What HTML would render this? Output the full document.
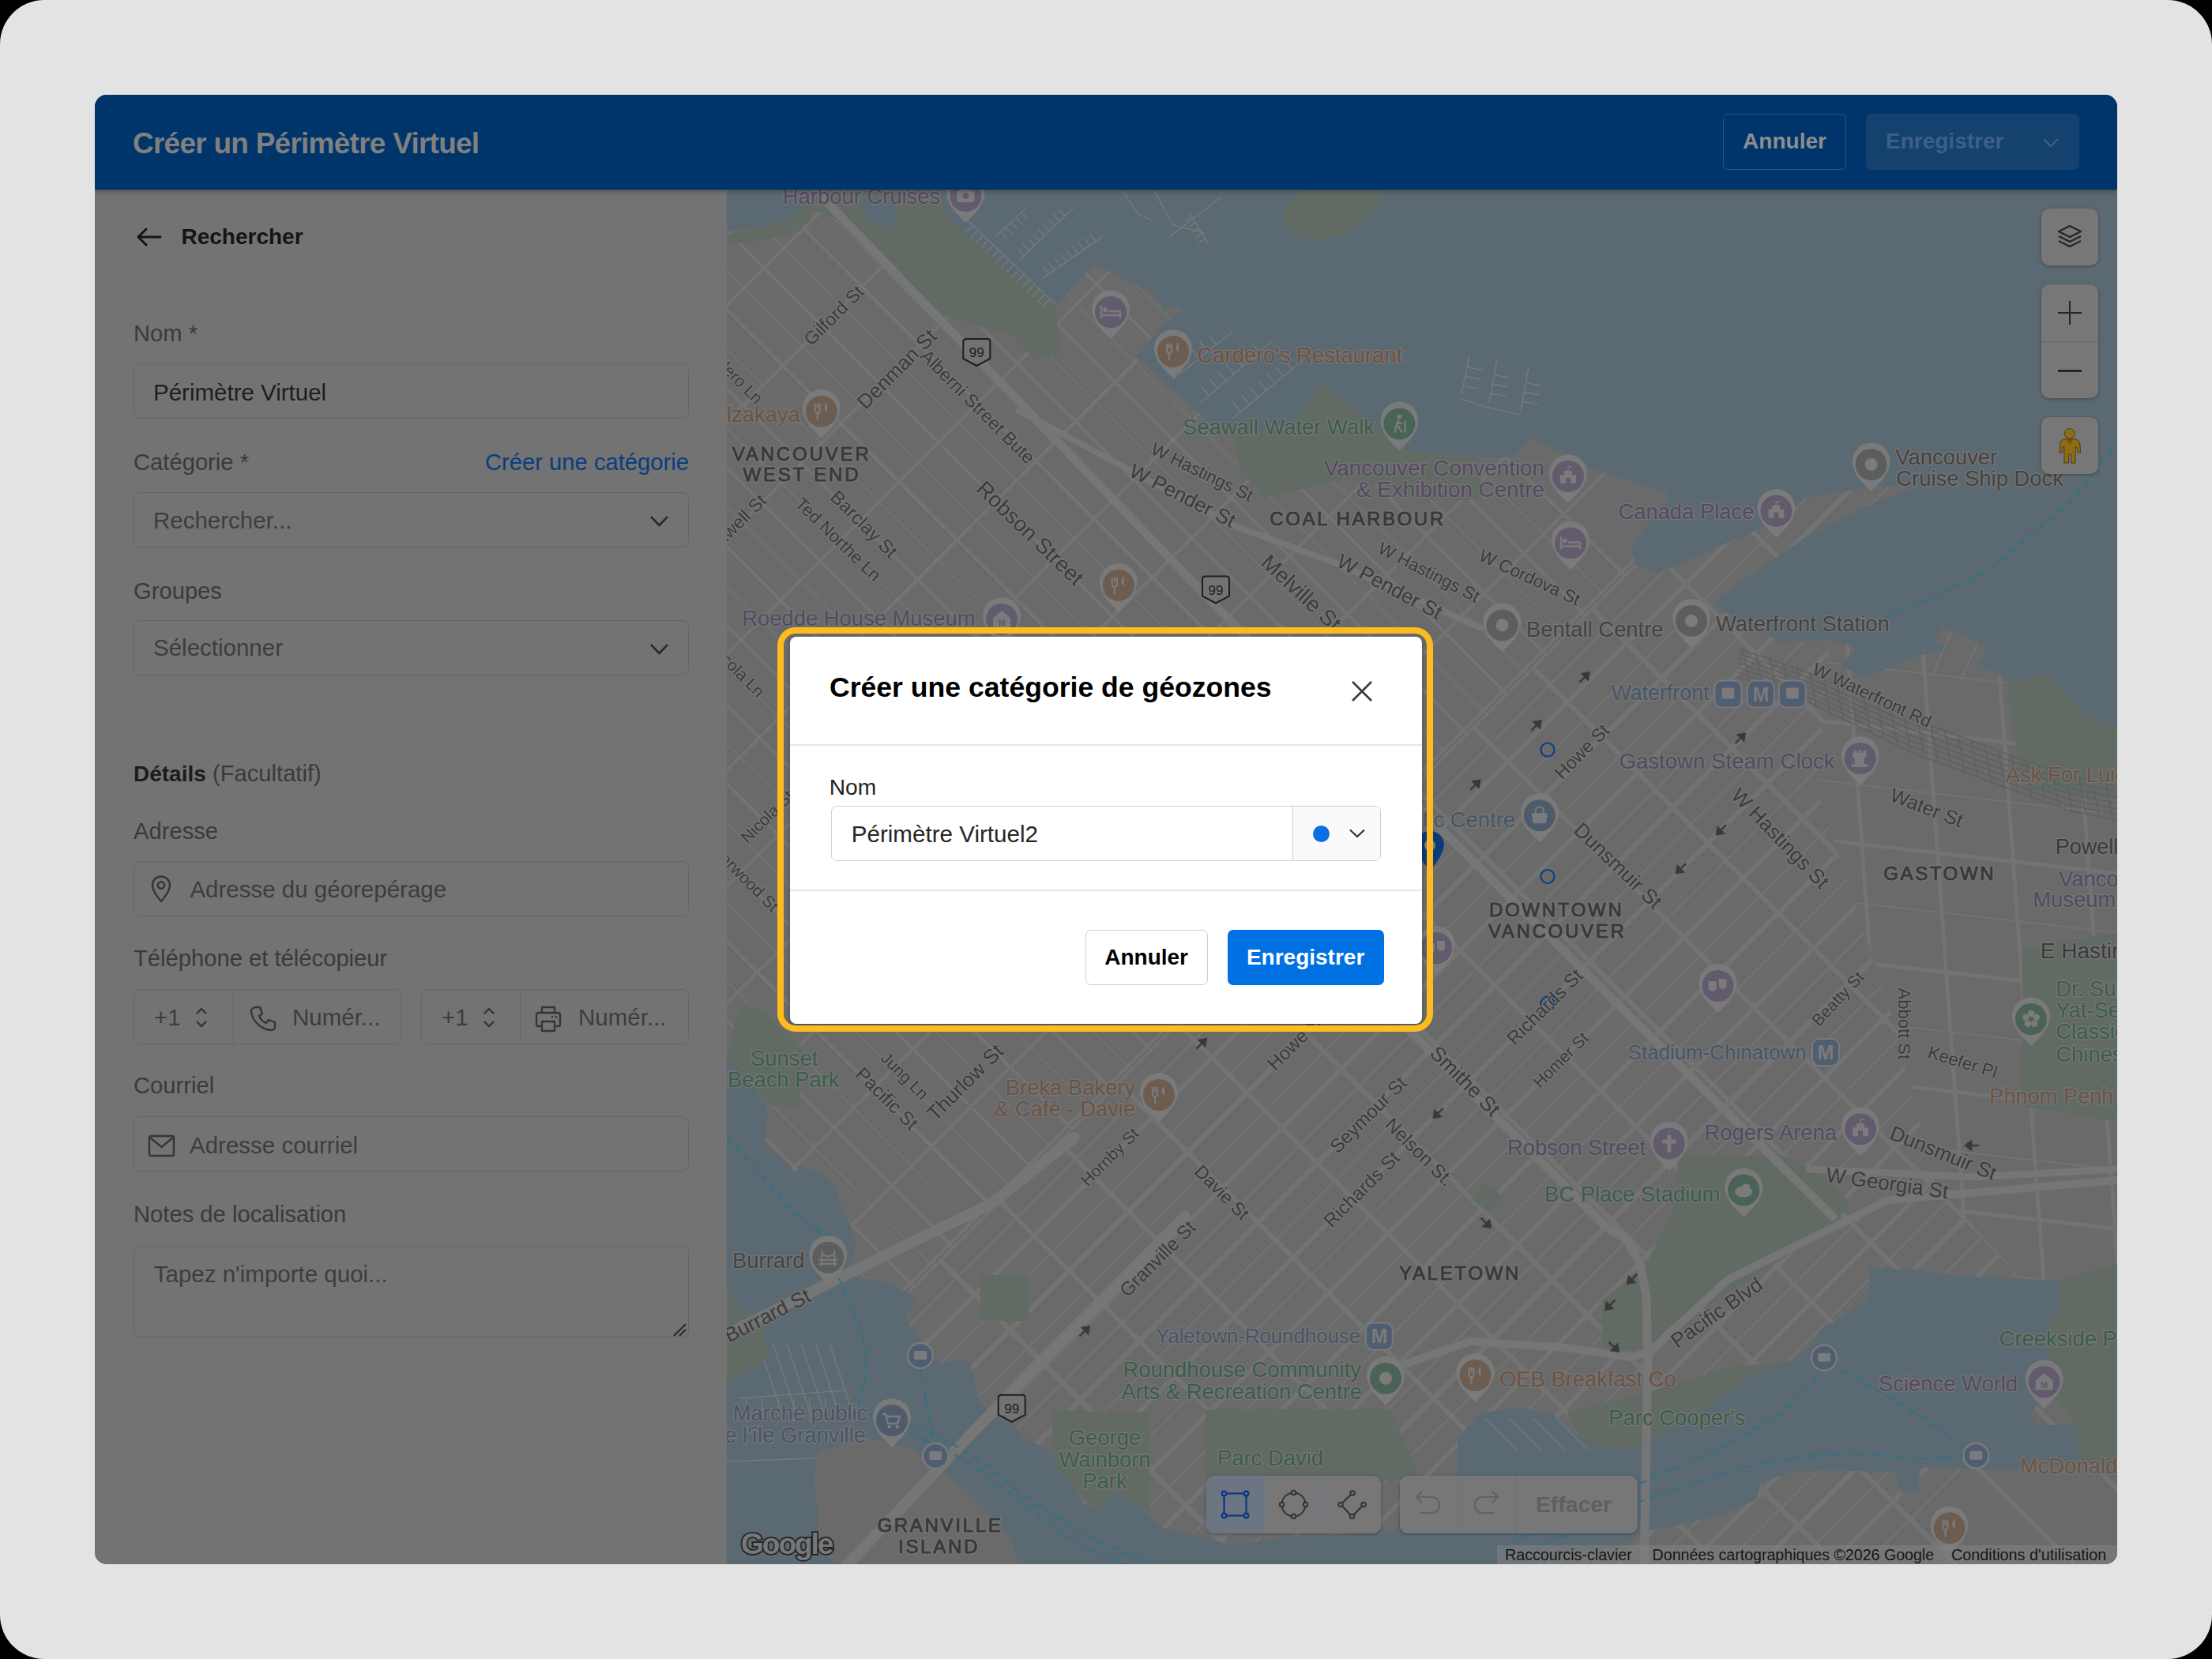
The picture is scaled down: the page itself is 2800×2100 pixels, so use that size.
<!DOCTYPE html>
<html><head><meta charset="utf-8">
<style>
*{box-sizing:border-box;margin:0;padding:0}
html,body{width:2800px;height:2100px;overflow:hidden;background:#000;font-family:"Liberation Sans",sans-serif}
#frame{position:absolute;left:0;top:0;width:2800px;height:2100px;background:#e3e3e3;border-radius:56px}
#win{position:absolute;left:120px;top:120px;width:2560px;height:1860px;border-radius:15px;overflow:hidden;background:#737373}
.abs{position:absolute}
#hdr{position:absolute;left:0;top:0;width:2560px;height:120px;background:#00356b;z-index:5;box-shadow:0 2px 6px rgba(0,0,0,.35)}
#hdr .title{position:absolute;left:48px;top:40px;font-size:37px;font-weight:700;color:#808080;letter-spacing:-0.75px;line-height:44px;white-space:nowrap}
#hbtn1{position:absolute;left:2061px;top:24px;width:156px;height:71px;border:1.5px solid #2a5380;border-radius:6px;color:#8e8e8e;font-weight:700;font-size:28px;line-height:67px;text-align:center}
#hbtn2{position:absolute;left:2242px;top:24px;width:270px;height:71px;background:#15416f;border-radius:7px;color:#3b5f8a;font-weight:700;font-size:28px;line-height:70px;padding-left:25px}
#panel{position:absolute;left:0;top:120px;width:800px;height:1740px;background:#737373}
.lbl{position:absolute;left:49px;font-size:29.2px;color:#3a3a3a;white-space:nowrap;line-height:29.2px}
.inp{position:absolute;left:49px;width:703px;height:70px;border:1.5px solid #666;border-radius:8px}
.itx{position:absolute;font-size:29.5px;color:#1e1e1e;white-space:nowrap;line-height:29.5px}
.ph{color:#3d3d3d}
#map{position:absolute;left:800px;top:120px;width:1760px;height:1740px;background:#707070;overflow:hidden}
.mbtn{position:absolute;background:#777;border-radius:10px;box-shadow:0 1px 4px rgba(0,0,0,.3)}
#modal{position:absolute;left:1000px;top:806px;width:800px;height:490px;background:#fff;border-radius:8px;z-index:20;box-shadow:0 2px 4px rgba(0,0,0,.3)}
#ring{position:absolute;left:984px;top:794px;width:830px;height:512px;border:8px solid #fdbb1f;border-radius:23px;z-index:21}
</style></head>
<body>
<div id="frame"></div>
<div id="win">
  <div id="hdr">
    <div class="title">Créer un Périmètre Virtuel</div>
    <div id="hbtn1">Annuler</div>
    <div id="hbtn2">Enregistrer<svg class="abs" style="left:223px;top:30px" width="22" height="14" viewBox="0 0 22 14"><path d="M2 2 L11 11 L20 2" fill="none" stroke="#3b5f8a" stroke-width="2.2"/></svg></div>
  </div>
  <div id="panel">
    <svg class="abs" style="left:52px;top:47px" width="34" height="26" viewBox="0 0 34 26"><path d="M31 13 H4 M13 3 L3 13 L13 23" fill="none" stroke="#161616" stroke-width="3" stroke-linecap="round" stroke-linejoin="round"/></svg>
    <div class="abs" style="left:109.5px;top:46.3px;font-size:28px;line-height:28px;font-weight:700;color:#141414;white-space:nowrap">Rechercher</div>
    <div class="abs" style="left:0;top:120px;width:800px;height:1px;background:#6b6b6b"></div>
    <div class="lbl" style="top:167.5px">Nom *</div>
    <div class="inp" style="top:220px"></div>
    <div class="itx" style="left:74px;top:241.6px">Périmètre Virtuel</div>
    <div class="lbl" style="top:330.5px">Catégorie *</div>
    <div class="lbl" style="left:auto;right:48px;top:330.5px;color:#083d7f">Créer une catégorie</div>
    <div class="inp" style="top:383px"></div>
    <div class="itx ph" style="left:74px;top:404px">Rechercher...</div>
    <svg class="abs" style="left:702px;top:411px" width="25" height="17" viewBox="0 0 25 17"><path d="M2 3 L12.5 14 L23 3" fill="none" stroke="#2a2a2a" stroke-width="2.6"/></svg>
    <div class="lbl" style="top:493.5px">Groupes</div>
    <div class="inp" style="top:545px"></div>
    <div class="itx ph" style="left:74px;top:565.3px">Sélectionner</div>
    <svg class="abs" style="left:702px;top:573px" width="25" height="17" viewBox="0 0 25 17"><path d="M2 3 L12.5 14 L23 3" fill="none" stroke="#2a2a2a" stroke-width="2.6"/></svg>
    <div class="abs" style="left:49px;top:686.5px;width:703px;height:1px;background:#6c6c6c"></div>
    <div class="lbl" style="top:725.4px"><b style="color:#1c1c1c;font-size:28px">Détails</b> (Facultatif)</div>
    <div class="lbl" style="top:797.5px">Adresse</div>
    <div class="inp" style="top:850px"></div>
    <svg class="abs" style="left:69px;top:867px" width="30" height="36" viewBox="0 0 30 36"><path d="M15 34 C15 34 4 22 4 13.5 A11 11 0 0 1 26 13.5 C26 22 15 34 15 34 Z" fill="none" stroke="#353535" stroke-width="2.4" stroke-linejoin="round"/><circle cx="15" cy="13.5" r="4.2" fill="none" stroke="#353535" stroke-width="2.4"/></svg>
    <div class="itx ph" style="left:120.4px;top:871px">Adresse du géorepérage</div>
    <div class="lbl" style="top:959.4px">Téléphone et télécopieur</div>
    <div class="inp" style="top:1012px;width:339px"></div>
    <div class="abs" style="left:174.5px;top:1012px;width:1.5px;height:70px;background:#666"></div>
    <div class="itx ph" style="left:75px;top:1032.7px">+1</div>
    <svg class="abs" style="left:125px;top:1034px" width="20" height="28" viewBox="0 0 20 28"><path d="M4 9 L10 3 L16 9 M4 19 L10 25 L16 19" fill="none" stroke="#353535" stroke-width="2.4"/></svg>
    <svg class="abs" style="left:196px;top:1032px" width="34" height="34" viewBox="0 0 34 34"><path d="M8 3 L13 3 L16 11 L12 14 C14 19 16 21 21 23 L24 19 L32 22 L32 27 C32 30 30 32 27 32 C14 31 3 20 2 8 C2 5 5 3 8 3 Z" fill="none" stroke="#353535" stroke-width="2.3" stroke-linejoin="round"/></svg>
    <div class="itx ph" style="left:250px;top:1032.7px">Numér...</div>
    <div class="inp" style="left:413.4px;top:1012px;width:338.6px"></div>
    <div class="abs" style="left:537.5px;top:1012px;width:1.5px;height:70px;background:#666"></div>
    <div class="itx ph" style="left:439px;top:1032.7px">+1</div>
    <svg class="abs" style="left:489px;top:1034px" width="20" height="28" viewBox="0 0 20 28"><path d="M4 9 L10 3 L16 9 M4 19 L10 25 L16 19" fill="none" stroke="#353535" stroke-width="2.4"/></svg>
    <svg class="abs" style="left:557px;top:1032px" width="34" height="36" viewBox="0 0 34 36"><path d="M9 10 V3 H25 V10 M9 27 H4 C3 27 2 26 2 25 V13 C2 11 3 10 5 10 H29 C31 10 32 11 32 13 V25 C32 26 31 27 30 27 H25 M9 21 H25 V33 H9 Z" fill="none" stroke="#353535" stroke-width="2.3" stroke-linejoin="round"/><circle cx="22" cy="15" r="1.3" fill="#353535"/><circle cx="27" cy="15" r="1.3" fill="#353535"/></svg>
    <div class="itx ph" style="left:612px;top:1032.7px">Numér...</div>
    <div class="lbl" style="top:1120.3px">Courriel</div>
    <div class="inp" style="top:1173px"></div>
    <svg class="abs" style="left:67px;top:1196px" width="35" height="29" viewBox="0 0 35 29"><rect x="2" y="2" width="31" height="25" rx="2" fill="none" stroke="#353535" stroke-width="2.4"/><path d="M3 4 L17.5 16 L32 4" fill="none" stroke="#353535" stroke-width="2.4"/></svg>
    <div class="itx ph" style="left:120px;top:1194.5px">Adresse courriel</div>
    <div class="lbl" style="top:1282.6px">Notes de localisation</div>
    <div class="inp" style="top:1337px;height:116px"></div>
    <div class="itx ph" style="left:74.8px;top:1358px">Tapez n'importe quoi...</div>
    <svg class="abs" style="left:731px;top:1434px" width="19" height="19" viewBox="0 0 19 19"><path d="M2 17 L17 2 M9 17 L17 9" fill="none" stroke="#2a2a2a" stroke-width="2.2"/></svg>
  </div>
  <div id="map"><svg class="abs" style="left:0;top:0" width="1760" height="1740" viewBox="920 240 1760 1740">
<defs><clipPath id="cWE"><polygon points="920,240 2544,240 920,1864"/></clipPath><clipPath id="cDT"><polygon points="2544,240 2680,240 2680,700 2320,760 2300,1000 2400,1300 2450,1500 2680,1750 2680,1980 920,1980 920,1864"/></clipPath><clipPath id="cGT"><polygon points="2320,760 2680,700 2680,1750 2450,1500 2400,1300 2300,1000"/></clipPath></defs>
<rect x="920" y="240" width="1760" height="1740" fill="#6a6a6a"/>
<g clip-path="url(#cWE)">
<g stroke="#737373" fill="none"><line x1="900.0" y1="-428.0" x2="2700.0" y2="1372.0" stroke-width="4"/><line x1="900.0" y1="-378.0" x2="2700.0" y2="1422.0" stroke-width="1.6"/><line x1="900.0" y1="-328.0" x2="2700.0" y2="1472.0" stroke-width="4"/><line x1="900.0" y1="-278.0" x2="2700.0" y2="1522.0" stroke-width="1.6"/><line x1="900.0" y1="-228.0" x2="2700.0" y2="1572.0" stroke-width="4"/><line x1="900.0" y1="-178.0" x2="2700.0" y2="1622.0" stroke-width="1.6"/><line x1="900.0" y1="-128.0" x2="2700.0" y2="1672.0" stroke-width="4"/><line x1="900.0" y1="-78.0" x2="2700.0" y2="1722.0" stroke-width="1.6"/><line x1="900.0" y1="-28.0" x2="2700.0" y2="1772.0" stroke-width="4"/><line x1="900.0" y1="22.0" x2="2700.0" y2="1822.0" stroke-width="1.6"/><line x1="900.0" y1="72.0" x2="2700.0" y2="1872.0" stroke-width="4"/><line x1="900.0" y1="122.0" x2="2700.0" y2="1922.0" stroke-width="1.6"/><line x1="900.0" y1="172.0" x2="2700.0" y2="1972.0" stroke-width="4"/><line x1="900.0" y1="222.0" x2="2700.0" y2="2022.0" stroke-width="1.6"/><line x1="900.0" y1="272.0" x2="2700.0" y2="2072.0" stroke-width="4"/><line x1="900.0" y1="322.0" x2="2700.0" y2="2122.0" stroke-width="1.6"/><line x1="900.0" y1="372.0" x2="2700.0" y2="2172.0" stroke-width="4"/><line x1="900.0" y1="422.0" x2="2700.0" y2="2222.0" stroke-width="1.6"/><line x1="900.0" y1="472.0" x2="2700.0" y2="2272.0" stroke-width="4"/><line x1="900.0" y1="522.0" x2="2700.0" y2="2322.0" stroke-width="1.6"/><line x1="900.0" y1="572.0" x2="2700.0" y2="2372.0" stroke-width="4"/><line x1="900.0" y1="622.0" x2="2700.0" y2="2422.0" stroke-width="1.6"/><line x1="900.0" y1="672.0" x2="2700.0" y2="2472.0" stroke-width="4"/><line x1="900.0" y1="722.0" x2="2700.0" y2="2522.0" stroke-width="1.6"/><line x1="900.0" y1="772.0" x2="2700.0" y2="2572.0" stroke-width="4"/><line x1="900.0" y1="822.0" x2="2700.0" y2="2622.0" stroke-width="1.6"/><line x1="900.0" y1="872.0" x2="2700.0" y2="2672.0" stroke-width="4"/><line x1="900.0" y1="922.0" x2="2700.0" y2="2722.0" stroke-width="1.6"/><line x1="900.0" y1="972.0" x2="2700.0" y2="2772.0" stroke-width="4"/><line x1="900.0" y1="1022.0" x2="2700.0" y2="2822.0" stroke-width="1.6"/><line x1="900.0" y1="1072.0" x2="2700.0" y2="2872.0" stroke-width="4"/><line x1="900.0" y1="1122.0" x2="2700.0" y2="2922.0" stroke-width="1.6"/><line x1="900.0" y1="1172.0" x2="2700.0" y2="2972.0" stroke-width="4"/><line x1="900.0" y1="1222.0" x2="2700.0" y2="3022.0" stroke-width="1.6"/><line x1="900.0" y1="1272.0" x2="2700.0" y2="3072.0" stroke-width="4"/><line x1="900.0" y1="1322.0" x2="2700.0" y2="3122.0" stroke-width="1.6"/><line x1="900.0" y1="1372.0" x2="2700.0" y2="3172.0" stroke-width="4"/><line x1="900.0" y1="1422.0" x2="2700.0" y2="3222.0" stroke-width="1.6"/><line x1="900.0" y1="1472.0" x2="2700.0" y2="3272.0" stroke-width="4"/><line x1="900.0" y1="1522.0" x2="2700.0" y2="3322.0" stroke-width="1.6"/><line x1="900.0" y1="1572.0" x2="2700.0" y2="3372.0" stroke-width="4"/><line x1="900.0" y1="1622.0" x2="2700.0" y2="3422.0" stroke-width="1.6"/><line x1="900.0" y1="1672.0" x2="2700.0" y2="3472.0" stroke-width="4"/><line x1="900.0" y1="1722.0" x2="2700.0" y2="3522.0" stroke-width="1.6"/></g>
<g stroke="#737373" fill="none"><line x1="900.0" y1="260.0" x2="2700.0" y2="-1540.0" stroke-width="4"/><line x1="900.0" y1="407.0" x2="2700.0" y2="-1393.0" stroke-width="4"/><line x1="900.0" y1="554.0" x2="2700.0" y2="-1246.0" stroke-width="4"/><line x1="900.0" y1="701.0" x2="2700.0" y2="-1099.0" stroke-width="4"/><line x1="900.0" y1="848.0" x2="2700.0" y2="-952.0" stroke-width="4"/><line x1="900.0" y1="995.0" x2="2700.0" y2="-805.0" stroke-width="4"/><line x1="900.0" y1="1142.0" x2="2700.0" y2="-658.0" stroke-width="4"/><line x1="900.0" y1="1289.0" x2="2700.0" y2="-511.0" stroke-width="4"/><line x1="900.0" y1="1436.0" x2="2700.0" y2="-364.0" stroke-width="4"/><line x1="900.0" y1="1583.0" x2="2700.0" y2="-217.0" stroke-width="4"/><line x1="900.0" y1="1730.0" x2="2700.0" y2="-70.0" stroke-width="4"/><line x1="900.0" y1="1877.0" x2="2700.0" y2="77.0" stroke-width="4"/></g>
</g>
<g clip-path="url(#cDT)">
<g stroke="#737373" fill="none"><line x1="900.0" y1="1884.0" x2="2700.0" y2="84.0" stroke-width="6"/><line x1="900.0" y1="1928.5" x2="2700.0" y2="128.5" stroke-width="2"/><line x1="900.0" y1="1973.0" x2="2700.0" y2="173.0" stroke-width="6"/><line x1="900.0" y1="2017.5" x2="2700.0" y2="217.5" stroke-width="2"/><line x1="900.0" y1="2062.0" x2="2700.0" y2="262.0" stroke-width="6"/><line x1="900.0" y1="2106.5" x2="2700.0" y2="306.5" stroke-width="2"/><line x1="900.0" y1="2151.0" x2="2700.0" y2="351.0" stroke-width="6"/><line x1="900.0" y1="2195.5" x2="2700.0" y2="395.5" stroke-width="2"/><line x1="900.0" y1="2240.0" x2="2700.0" y2="440.0" stroke-width="6"/><line x1="900.0" y1="2284.5" x2="2700.0" y2="484.5" stroke-width="2"/><line x1="900.0" y1="2329.0" x2="2700.0" y2="529.0" stroke-width="6"/><line x1="900.0" y1="2373.5" x2="2700.0" y2="573.5" stroke-width="2"/><line x1="900.0" y1="2418.0" x2="2700.0" y2="618.0" stroke-width="6"/><line x1="900.0" y1="2462.5" x2="2700.0" y2="662.5" stroke-width="2"/><line x1="900.0" y1="2507.0" x2="2700.0" y2="707.0" stroke-width="6"/><line x1="900.0" y1="2551.5" x2="2700.0" y2="751.5" stroke-width="2"/><line x1="900.0" y1="2596.0" x2="2700.0" y2="796.0" stroke-width="6"/><line x1="900.0" y1="2640.5" x2="2700.0" y2="840.5" stroke-width="2"/><line x1="900.0" y1="2685.0" x2="2700.0" y2="885.0" stroke-width="6"/><line x1="900.0" y1="2729.5" x2="2700.0" y2="929.5" stroke-width="2"/><line x1="900.0" y1="2774.0" x2="2700.0" y2="974.0" stroke-width="6"/><line x1="900.0" y1="2818.5" x2="2700.0" y2="1018.5" stroke-width="2"/><line x1="900.0" y1="2863.0" x2="2700.0" y2="1063.0" stroke-width="6"/><line x1="900.0" y1="2907.5" x2="2700.0" y2="1107.5" stroke-width="2"/><line x1="900.0" y1="2952.0" x2="2700.0" y2="1152.0" stroke-width="6"/><line x1="900.0" y1="2996.5" x2="2700.0" y2="1196.5" stroke-width="2"/><line x1="900.0" y1="3041.0" x2="2700.0" y2="1241.0" stroke-width="6"/><line x1="900.0" y1="3085.5" x2="2700.0" y2="1285.5" stroke-width="2"/><line x1="900.0" y1="3130.0" x2="2700.0" y2="1330.0" stroke-width="6"/><line x1="900.0" y1="3174.5" x2="2700.0" y2="1374.5" stroke-width="2"/><line x1="900.0" y1="3219.0" x2="2700.0" y2="1419.0" stroke-width="6"/><line x1="900.0" y1="3263.5" x2="2700.0" y2="1463.5" stroke-width="2"/><line x1="900.0" y1="3308.0" x2="2700.0" y2="1508.0" stroke-width="6"/><line x1="900.0" y1="3352.5" x2="2700.0" y2="1552.5" stroke-width="2"/><line x1="900.0" y1="3397.0" x2="2700.0" y2="1597.0" stroke-width="6"/><line x1="900.0" y1="3441.5" x2="2700.0" y2="1641.5" stroke-width="2"/></g>
<g stroke="#737373" fill="none"><line x1="900.0" y1="-645.0" x2="2700.0" y2="1155.0" stroke-width="6"/><line x1="900.0" y1="-495.0" x2="2700.0" y2="1305.0" stroke-width="6"/><line x1="900.0" y1="-345.0" x2="2700.0" y2="1455.0" stroke-width="6"/><line x1="900.0" y1="-195.0" x2="2700.0" y2="1605.0" stroke-width="6"/><line x1="900.0" y1="-45.0" x2="2700.0" y2="1755.0" stroke-width="6"/><line x1="900.0" y1="105.0" x2="2700.0" y2="1905.0" stroke-width="6"/><line x1="900.0" y1="255.0" x2="2700.0" y2="2055.0" stroke-width="6"/><line x1="900.0" y1="405.0" x2="2700.0" y2="2205.0" stroke-width="6"/><line x1="900.0" y1="555.0" x2="2700.0" y2="2355.0" stroke-width="6"/><line x1="900.0" y1="705.0" x2="2700.0" y2="2505.0" stroke-width="6"/><line x1="900.0" y1="855.0" x2="2700.0" y2="2655.0" stroke-width="6"/><line x1="900.0" y1="1005.0" x2="2700.0" y2="2805.0" stroke-width="6"/><line x1="900.0" y1="1155.0" x2="2700.0" y2="2955.0" stroke-width="6"/><line x1="900.0" y1="1305.0" x2="2700.0" y2="3105.0" stroke-width="6"/></g>
</g>
<g clip-path="url(#cGT)"><g stroke="#737373" fill="none"><line x1="2280" y1="610.0" x2="2680" y2="655.6" stroke-width="5"/><line x1="2280" y1="685.0" x2="2680" y2="730.6" stroke-width="2"/><line x1="2280" y1="760.0" x2="2680" y2="805.6" stroke-width="5"/><line x1="2280" y1="835.0" x2="2680" y2="880.6" stroke-width="2"/><line x1="2280" y1="910.0" x2="2680" y2="955.6" stroke-width="5"/><line x1="2280" y1="985.0" x2="2680" y2="1030.6" stroke-width="2"/><line x1="2280" y1="1060.0" x2="2680" y2="1105.6" stroke-width="5"/><line x1="2280" y1="1135.0" x2="2680" y2="1180.6" stroke-width="2"/><line x1="2280" y1="1210.0" x2="2680" y2="1255.6" stroke-width="5"/><line x1="2280" y1="1285.0" x2="2680" y2="1330.6" stroke-width="2"/><line x1="2280" y1="1360.0" x2="2680" y2="1405.6" stroke-width="5"/><line x1="2280" y1="1435.0" x2="2680" y2="1480.6" stroke-width="2"/><line x1="2280" y1="1510.0" x2="2680" y2="1555.6" stroke-width="5"/><line x1="2280" y1="1585.0" x2="2680" y2="1630.6" stroke-width="2"/><line x1="2235" y1="700" x2="2315" y2="1800" stroke-width="5"/><line x1="2330" y1="700" x2="2410" y2="1800" stroke-width="5"/><line x1="2425" y1="700" x2="2505" y2="1800" stroke-width="5"/><line x1="2520" y1="700" x2="2600" y2="1800" stroke-width="5"/><line x1="2615" y1="700" x2="2695" y2="1800" stroke-width="5"/><line x1="2710" y1="700" x2="2790" y2="1800" stroke-width="5"/><line x1="2805" y1="700" x2="2885" y2="1800" stroke-width="5"/></g></g>
<polygon points="920,298 966,287 1004,275 1020,260 1031,240 1197,240 1208,285 1236,304 1264,335 1306,363 1337,386 1340,450 1310,455 1282,425 1194,399 1119,338 1057,276 1031,266 1015,290 968,304 920,310" fill="#616b64"/>
<polygon points="1561,520 1617,545.5 1673,487 1712.6,514.7 1780,568 1818,576 1875,580 1875,633 1800,632 1712.6,604 1600,630 1567,590" fill="#616b64"/>
<polygon points="2125.8,1461.7 2260,1463.7 2304.8,1486 2341.4,1522.7 2321,1551 2227.5,1612 2134,1669 2089,1706 2028,1714 2028,1645 2081,1604 2117.7,1535" fill="#616b64"/>
<polygon points="1983,1788 2085,1763 2187,1731 2268,1723 2187,1763 2126,1804 2085,1824 2065,1837 2024,1833 2000,1820" fill="#616b64"/>
<polygon points="1331,1785 1455,1788 1455,1912.5 1389,1912.5 1334,1855" fill="#616b64"/>
<polygon points="1526,1784 1760,1784 1800,1874 1526,1874" fill="#616b64"/>
<polygon points="920,1340 936,1272 963,1276 1015,1326 1012,1400 975,1400 950,1370 920,1345" fill="#616b64"/>
<polygon points="2540,861 2594,853 2634,902 2680,922 2680,1010 2560,1000" fill="#616b64"/>
<polygon points="2560,1200 2680,1180 2680,1420 2560,1400" fill="#616b64"/>
<polygon points="2606,1621 2680,1600 2680,1850 2630,1853 2630,1804 2594,1763 2592,1678 2606,1662" fill="#616b64"/>
<polygon points="1241,1614 1302,1614 1302,1672 1241,1672" fill="#616b64"/>
<polygon points="1880,1497 1902,1515 1884,1535 1862,1517" fill="#616b64"/>
<polygon points="1191,240 2680,240 2680,922 2634,902 2594,853 2541,861 2472,821 2431,829 2359,858 2331,842 2350,820 2318,810 2255,813 2191,778.5 2172,769 2176,756 2286,680 2381,633 2429,617 2381,614 2286,630 2223,671 2100,725 2071,715 2065,696 2084,665 2112,633 2109,623 2020,595 1986,579 1941,554 1913,579 1818,576 1780,568 1768.6,562.3 1712.6,514.7 1676,487 1668,492 1628.5,545.5 1595,551 1533,537 1483,492 1449,459 1438,453 1474,408 1499.5,393 1488,386 1474,394 1460,372 1404,344 1387,332.5 1382,338 1337,386 1306,363 1264,335 1236,304.5 1208,285 1197,268" fill="#5b6973"/>
<polygon points="920,240 1031,240 1019,260 1004,274 966,287 920,292" fill="#5b6973"/>
<polygon points="920,1340 947,1362 970,1400 971,1413 967,1449 995,1470 1008,1488 1013,1474 1049,1492 1058,1508 1065,1526 1076,1549 1083,1571 1078,1601 1083,1617 1123,1623 1152,1638 1160,1649 1146,1664 1152,1681 1175,1710 1192,1727 1209,1722 1227,1724 1233,1745 1238,1774 1253,1788 1264,1797 1282,1803 1296,1820 1319,1832 1337,1846 1334,1855 1354,1875 1371,1904 1389,1913 1412,1889 1441,1904 1470,1933 1528,1947 1560,1956 1640,1945 1760,1940 1845,1869 1845,1820 1874,1788 1922,1782 1967,1792 2000,1820 2024,1833 2065,1837 2085,1824 2126,1804 2187,1763 2228,1735 2268,1723 2293,1702 2305,1682 2321,1674 2350,1654 2366,1641 2366,1605 2431,1607 2472,1615 2606,1621 2606,1662 2592,1678 2594,1763 2569,1788 2577,1804 2630,1804 2630,1853 2545,1861 2431,1857 2427,1886 2407,1890 2398,1863 2309,1861 2268,1863 2228,1877 2224,1898 2187,1914 2126,1930 2081,1938 2065,1951 2024,1963 1943,1980 920,1980" fill="#5b6973"/>
<ellipse cx="1114" cy="268" rx="24" ry="18" transform="rotate(25 1114 268)" fill="#5b6973"/>
<ellipse cx="1686" cy="262" rx="64" ry="36" transform="rotate(-22 1686 262)" fill="#616b64"/>
<g stroke="#777" stroke-width="1.6" fill="none"><line x1="1225" y1="279" x2="1337" y2="386"/><line x1="1231.5" y1="285.2" x2="1221.8" y2="295.3"/><line x1="1238.0" y1="291.4" x2="1228.3" y2="301.6"/><line x1="1244.5" y1="297.7" x2="1234.9" y2="307.8"/><line x1="1251.0" y1="303.9" x2="1241.4" y2="314.0"/><line x1="1257.5" y1="310.1" x2="1247.9" y2="320.2"/><line x1="1264.0" y1="316.3" x2="1254.4" y2="326.4"/><line x1="1270.6" y1="322.5" x2="1260.9" y2="332.6"/><line x1="1277.1" y1="328.7" x2="1267.4" y2="338.9"/><line x1="1283.6" y1="335.0" x2="1273.9" y2="345.1"/><line x1="1290.1" y1="341.2" x2="1280.4" y2="351.3"/><line x1="1296.6" y1="347.4" x2="1286.9" y2="357.5"/><line x1="1303.1" y1="353.6" x2="1293.4" y2="363.7"/><line x1="1309.6" y1="359.8" x2="1299.9" y2="369.9"/><line x1="1316.1" y1="366.0" x2="1306.4" y2="376.2"/><line x1="1322.6" y1="372.3" x2="1312.9" y2="382.4"/><line x1="1329.1" y1="378.5" x2="1319.5" y2="388.6"/><line x1="1260" y1="300" x2="1300" y2="262"/><line x1="1266.5" y1="293.8" x2="1274.8" y2="302.5"/><line x1="1273.0" y1="287.6" x2="1281.3" y2="296.3"/><line x1="1279.6" y1="281.4" x2="1287.8" y2="290.1"/><line x1="1286.1" y1="275.2" x2="1294.4" y2="283.9"/><line x1="1292.6" y1="269.0" x2="1300.9" y2="277.7"/><line x1="1290" y1="330" x2="1360" y2="262"/><line x1="1296.5" y1="323.7" x2="1288.1" y2="315.1"/><line x1="1302.9" y1="317.5" x2="1294.5" y2="308.9"/><line x1="1309.4" y1="311.2" x2="1301.0" y2="302.6"/><line x1="1315.8" y1="304.9" x2="1307.5" y2="296.3"/><line x1="1322.3" y1="298.6" x2="1313.9" y2="290.0"/><line x1="1328.7" y1="292.4" x2="1320.4" y2="283.8"/><line x1="1335.2" y1="286.1" x2="1326.8" y2="277.5"/><line x1="1341.6" y1="279.8" x2="1333.3" y2="271.2"/><line x1="1348.1" y1="273.6" x2="1339.7" y2="265.0"/><line x1="1320" y1="352" x2="1395" y2="300"/><line x1="1327.4" y1="346.9" x2="1320.6" y2="337.0"/><line x1="1334.8" y1="341.7" x2="1328.0" y2="331.9"/><line x1="1342.2" y1="336.6" x2="1335.4" y2="326.8"/><line x1="1349.6" y1="331.5" x2="1342.7" y2="321.6"/><line x1="1357.0" y1="326.4" x2="1350.1" y2="316.5"/><line x1="1364.4" y1="321.2" x2="1357.5" y2="311.4"/><line x1="1371.8" y1="316.1" x2="1364.9" y2="306.2"/><line x1="1379.2" y1="311.0" x2="1372.3" y2="301.1"/><line x1="1386.6" y1="305.8" x2="1379.7" y2="296.0"/><polyline points="1420,240 1440,270 1460,280" /><polyline points="1460,240 1485,285 1525,295"/><polyline points="1480,300 1530,262 1545,250"/><line x1="1505" y1="268" x2="1530" y2="310"/><line x1="1509.1" y1="274.9" x2="1500.5" y2="280.0"/><line x1="1513.2" y1="281.7" x2="1504.6" y2="286.9"/><line x1="1517.3" y1="288.6" x2="1508.7" y2="293.7"/><line x1="1521.4" y1="295.5" x2="1512.8" y2="300.6"/><line x1="1525.5" y1="302.4" x2="1516.9" y2="307.5"/><line x1="1485" y1="480" x2="1560" y2="420"/><line x1="1495.9" y1="471.3" x2="1485.9" y2="458.8"/><line x1="1506.9" y1="462.5" x2="1496.9" y2="450.0"/><line x1="1517.8" y1="453.8" x2="1507.8" y2="441.3"/><line x1="1528.7" y1="445.0" x2="1518.7" y2="432.5"/><line x1="1539.7" y1="436.3" x2="1529.7" y2="423.8"/><line x1="1520" y1="510" x2="1610" y2="432"/><line x1="1530.6" y1="500.8" x2="1520.1" y2="488.7"/><line x1="1541.2" y1="491.7" x2="1530.7" y2="479.6"/><line x1="1551.7" y1="482.5" x2="1541.3" y2="470.4"/><line x1="1562.3" y1="473.3" x2="1551.8" y2="461.2"/><line x1="1572.9" y1="464.2" x2="1562.4" y2="452.1"/><line x1="1583.5" y1="455.0" x2="1573.0" y2="442.9"/><line x1="1594.1" y1="445.8" x2="1583.6" y2="433.7"/><line x1="1560" y1="530" x2="1650" y2="455"/><line x1="1570.8" y1="521.0" x2="1560.5" y2="508.7"/><line x1="1581.5" y1="512.1" x2="1571.3" y2="499.8"/><line x1="1592.3" y1="503.1" x2="1582.0" y2="490.8"/><line x1="1603.0" y1="494.1" x2="1592.8" y2="481.9"/><line x1="1613.8" y1="485.2" x2="1603.5" y2="472.9"/><line x1="1624.5" y1="476.2" x2="1614.3" y2="463.9"/><line x1="1635.3" y1="467.3" x2="1625.0" y2="455.0"/><line x1="1850" y1="500" x2="1860" y2="450"/><line x1="1852.4" y1="488.2" x2="1872.0" y2="492.2"/><line x1="1854.7" y1="476.5" x2="1874.3" y2="480.4"/><line x1="1857.1" y1="464.7" x2="1876.7" y2="468.6"/><line x1="1885" y1="510" x2="1895" y2="455"/><line x1="1887.1" y1="498.2" x2="1906.8" y2="501.8"/><line x1="1889.3" y1="486.4" x2="1909.0" y2="490.0"/><line x1="1891.4" y1="474.6" x2="1911.1" y2="478.2"/><line x1="1925" y1="520" x2="1935" y2="465"/><line x1="1927.1" y1="508.2" x2="1946.8" y2="511.8"/><line x1="1929.3" y1="496.4" x2="1949.0" y2="500.0"/><line x1="1931.4" y1="484.6" x2="1951.1" y2="488.2"/><polyline points="1850,505 1880,515 1925,525"/><line x1="960" y1="1700" x2="990" y2="1790"/><line x1="978" y1="1700" x2="1008" y2="1790"/><line x1="996" y1="1700" x2="1026" y2="1790"/><line x1="1014" y1="1700" x2="1044" y2="1790"/><line x1="1032" y1="1700" x2="1062" y2="1790"/><line x1="1050" y1="1700" x2="1080" y2="1790"/><line x1="945" y1="1770" x2="945" y2="1800"/><line x1="965" y1="1770" x2="965" y2="1800"/><line x1="985" y1="1770" x2="985" y2="1800"/><line x1="1005" y1="1770" x2="1005" y2="1800"/><line x1="1025" y1="1770" x2="1025" y2="1800"/><line x1="1045" y1="1770" x2="1045" y2="1800"/><polyline points="935,1770 1070,1760"/><polyline points="920,1850 1055,1845"/><line x1="1880" y1="1795" x2="1920" y2="1835"/><line x1="1910" y1="1795" x2="1950" y2="1835"/><line x1="1940" y1="1795" x2="1980" y2="1835"/><line x1="1970" y1="1795" x2="2010" y2="1835"/></g>
<polygon points="1036,1837 1094,1820 1152,1832 1180,1852 1209,1875 1227,1889 1279,1947 1290,1980 1065,1980 1030,1962 1036,1918 1030,1875" fill="#6a6a6a"/>
<polygon points="920,1626 933,1653 960,1673 973,1710 964,1726 928,1747 920,1747" fill="#616b64"/>
<polyline points="1040,249 1560,789 2320,1540" fill="none" stroke="#767676" stroke-width="11" stroke-linejoin="round" stroke-linecap="round"/><polyline points="1290,520 1348,551 1558,664 1694,714 1875,795" fill="none" stroke="#767676" stroke-width="8" stroke-linejoin="round" stroke-linecap="round"/><polyline points="920,1689 1076,1611 1256,1523 1360,1440" fill="none" stroke="#767676" stroke-width="14" stroke-linejoin="round" stroke-linecap="round"/><polyline points="1064,1990 1296,1745 1412,1629 1500,1540" fill="none" stroke="#767676" stroke-width="14" stroke-linejoin="round" stroke-linecap="round"/><polyline points="1780,1726 1861,1698 1983,1706 2065,1718 2089,1710 2187,1620 2390,1519 2680,1494" fill="none" stroke="#767676" stroke-width="10" stroke-linejoin="round" stroke-linecap="round"/><polyline points="1780,1300 2033,1553 2058,1568 2076,1599 2084,1642 2086,1720 2081,1990" fill="none" stroke="#767676" stroke-width="11" stroke-linejoin="round" stroke-linecap="round"/><polyline points="2290,1480 2500,1490 2680,1480" fill="none" stroke="#767676" stroke-width="9" stroke-linejoin="round" stroke-linecap="round"/>
<g stroke="#5e5e5e" stroke-width="1.3" fill="none"><polyline points="2200,821 2280,848 2417,908.2 2532,951.2 2620,983.2 2680,995.2"/><polyline points="2200,827 2280,854 2417,915.4 2532,958.4 2620,990.4 2680,1002.4"/><polyline points="2200,833 2280,860 2417,922.6 2532,965.6 2620,997.6 2680,1009.6"/><polyline points="2200,839 2280,866 2417,929.8 2532,972.8 2620,1004.8 2680,1016.8"/><polyline points="2200,845 2280,872 2417,937.0 2532,980.0 2620,1012.0 2680,1024.0"/><polyline points="2200,851 2280,878 2417,944.2 2532,987.2 2620,1019.2 2680,1031.2"/><polyline points="2200,857 2280,884 2417,951.4 2532,994.4 2620,1026.4 2680,1038.4"/><line x1="2206.0" y1="820.4" x2="2214.0" y2="864.4"/><line x1="2223.0" y1="826.1" x2="2231.0" y2="870.1"/><line x1="2240.1" y1="831.9" x2="2248.1" y2="875.9"/><line x1="2257.1" y1="837.6" x2="2265.1" y2="881.6"/><line x1="2274.1" y1="843.4" x2="2282.1" y2="887.4"/><line x1="2291.2" y1="851.0" x2="2299.2" y2="895.0"/><line x1="2308.2" y1="858.8" x2="2316.2" y2="902.8"/><line x1="2325.3" y1="866.7" x2="2333.3" y2="910.7"/><line x1="2342.3" y1="874.5" x2="2350.3" y2="918.5"/><line x1="2359.3" y1="882.3" x2="2367.3" y2="926.3"/><line x1="2376.4" y1="890.2" x2="2384.4" y2="934.2"/><line x1="2393.4" y1="898.0" x2="2401.4" y2="942.0"/><line x1="2410.4" y1="905.8" x2="2418.4" y2="949.8"/><line x1="2427.5" y1="912.4" x2="2435.5" y2="956.4"/><line x1="2444.5" y1="918.8" x2="2452.5" y2="962.8"/><line x1="2461.6" y1="925.2" x2="2469.6" y2="969.2"/><line x1="2478.6" y1="931.5" x2="2486.6" y2="975.5"/><line x1="2495.6" y1="937.9" x2="2503.6" y2="981.9"/><line x1="2512.7" y1="944.3" x2="2520.7" y2="988.3"/><line x1="2529.7" y1="950.6" x2="2537.7" y2="994.6"/><line x1="2546.7" y1="956.8" x2="2554.7" y2="1000.8"/><line x1="2563.8" y1="963.0" x2="2571.8" y2="1007.0"/><line x1="2580.8" y1="969.2" x2="2588.8" y2="1013.2"/><line x1="2597.9" y1="975.4" x2="2605.9" y2="1019.4"/><line x1="2614.9" y1="981.6" x2="2622.9" y2="1025.6"/><line x1="2631.9" y1="985.2" x2="2639.9" y2="1029.2"/><line x1="2649.0" y1="988.6" x2="2657.0" y2="1032.6"/><line x1="2666.0" y1="992.0" x2="2674.0" y2="1036.0"/></g>
<polygon points="2458,793 2514,818 2506,838 2450,814" fill="#6a6a6a"/><line x1="2470" y1="800" x2="2446" y2="855" stroke="#777" stroke-width="1.5"/><line x1="2503" y1="815" x2="2482" y2="860" stroke="#777" stroke-width="1.5"/>
<g fill="none" stroke="#2d7385" stroke-width="2.2" stroke-dasharray="9 7"><polyline points="2388.5,781.5 2513.3,724.6 2620,636 2680,560"/><path d="M2309,1730 Q2280,1790 2140,1850 Q2000,1910 1900,1960"/><path d="M2318,1728 Q2420,1780 2490,1835"/><path d="M1900,1985 Q2050,1900 2200,1860 Q2320,1830 2400,1845 Q2450,1850 2495,1840"/><path d="M920,1440 Q960,1480 990,1520 Q1030,1560 1055,1565 Q1050,1600 1080,1660 Q1110,1720 1085,1780"/><path d="M1165,1730 Q1175,1790 1183,1830"/><path d="M1100,1790 Q1200,1810 1280,1880 Q1380,1960 1500,1990"/><path d="M1120,1805 Q1210,1830 1290,1900 Q1380,1975 1480,1995"/></g><path d="M1199.4,251 A24,24 0 1 1 1245.4,251 Q1242.4,262 1232.4,272 L1222.4,282 L1212.4,272 Q1202.4,262 1199.4,251 Z" fill="#7a7a7a"/><circle cx="1222.4" cy="248" r="20" fill="#625a6d"/><rect x="1211.4" y="241" width="22" height="15" rx="2" fill="#7b7b7b"/><rect x="1217.4" y="238" width="10" height="4" fill="#7b7b7b"/><circle cx="1222.4" cy="248" r="4" fill="#625a6d"/><path d="M1383,398 A24,24 0 1 1 1429,398 Q1426,409 1416,419 L1406,429 L1396,419 Q1386,409 1383,398 Z" fill="#7a7a7a"/><circle cx="1406" cy="395" r="20" fill="#625a6d"/><path d="M1394,387 v16 M1418,393 v10 M1394,399 h24 M1403,394 h15" stroke="#7b7b7b" stroke-width="2.5" fill="none"/><circle cx="1399" cy="392" r="3" fill="#7b7b7b"/><path d="M1462,448 A24,24 0 1 1 1508,448 Q1505,459 1495,469 L1485,479 L1475,469 Q1465,459 1462,448 Z" fill="#7a7a7a"/><circle cx="1485" cy="445" r="20" fill="#6d5d51"/><path d="M1477,435 v8 q0,4 3,4 v9 M1480,435 v6 M1483,435 v8 q0,4 -3,4" stroke="#7b7b7b" stroke-width="2.2" fill="none"/><path d="M1492,456 v-10 q-4,-2 -3,-8 q1,-4 3,-4 z" fill="#7b7b7b"/><path d="M1016.8,523.7 A24,24 0 1 1 1062.8,523.7 Q1059.8,534.7 1049.8,544.7 L1039.8,554.7 L1029.8,544.7 Q1019.8,534.7 1016.8,523.7 Z" fill="#7a7a7a"/><circle cx="1039.8" cy="520.7" r="20" fill="#6d5d51"/><path d="M1031.8,510.70000000000005 v8 q0,4 3,4 v9 M1034.8,510.70000000000005 v6 M1037.8,510.70000000000005 v8 q0,4 -3,4" stroke="#7b7b7b" stroke-width="2.2" fill="none"/><path d="M1046.8,531.7 v-10 q-4,-2 -3,-8 q1,-4 3,-4 z" fill="#7b7b7b"/><path d="M1748.4,539.4 A24,24 0 1 1 1794.4,539.4 Q1791.4,550.4 1781.4,560.4 L1771.4,570.4 L1761.4,560.4 Q1751.4,550.4 1748.4,539.4 Z" fill="#7a7a7a"/><circle cx="1771.4" cy="536.4" r="20" fill="#4a6357"/><circle cx="1771.4" cy="527.4" r="2.8" fill="#7b7b7b"/><path d="M1770.4,531.4 L1767.4,539.4 L1765.4,547.4 M1769.4,538.4 L1774.4,547.4 M1767.4,534.4 L1775.4,536.4 M1778.4,532.4 V547.4" stroke="#7b7b7b" stroke-width="2.4" fill="none"/><path d="M1962,606 A24,24 0 1 1 2008,606 Q2005,617 1995,627 L1985,637 L1975,627 Q1965,617 1962,606 Z" fill="#7a7a7a"/><circle cx="1985" cy="603" r="20" fill="#625a6d"/><path d="M1975,612 V601 H1980 V596 H1990 V601 H1995 V612 Z" fill="#7b7b7b"/><path d="M1985,596 V591 H1990" stroke="#7b7b7b" stroke-width="1.5" fill="none"/><rect x="1982" y="605" width="6" height="7" fill="#625a6d"/><path d="M2225.4,649.8 A24,24 0 1 1 2271.4,649.8 Q2268.4,660.8 2258.4,670.8 L2248.4,680.8 L2238.4,670.8 Q2228.4,660.8 2225.4,649.8 Z" fill="#7a7a7a"/><circle cx="2248.4" cy="646.8" r="20" fill="#625a6d"/><path d="M2238.4,655.8 V644.8 H2243.4 V639.8 H2253.4 V644.8 H2258.4 V655.8 Z" fill="#7b7b7b"/><path d="M2248.4,639.8 V634.8 H2253.4" stroke="#7b7b7b" stroke-width="1.5" fill="none"/><rect x="2245.4" y="648.8" width="6" height="7" fill="#625a6d"/><path d="M1965,690.5 A24,24 0 1 1 2011,690.5 Q2008,701.5 1998,711.5 L1988,721.5 L1978,711.5 Q1968,701.5 1965,690.5 Z" fill="#7a7a7a"/><circle cx="1988" cy="687.5" r="20" fill="#625a6d"/><path d="M1976,679.5 v16 M2000,685.5 v10 M1976,691.5 h24 M1985,686.5 h15" stroke="#7b7b7b" stroke-width="2.5" fill="none"/><circle cx="1981" cy="684.5" r="3" fill="#7b7b7b"/><path d="M2345.6,591 A24,24 0 1 1 2391.6,591 Q2388.6,602 2378.6,612 L2368.6,622 L2358.6,612 Q2348.6,602 2345.6,591 Z" fill="#7a7a7a"/><circle cx="2368.6" cy="588" r="20" fill="#5b5e5c"/><circle cx="2368.6" cy="588" r="8" fill="#7b7b7b"/><path d="M1878.5,794.4 A24,24 0 1 1 1924.5,794.4 Q1921.5,805.4 1911.5,815.4 L1901.5,825.4 L1891.5,815.4 Q1881.5,805.4 1878.5,794.4 Z" fill="#7a7a7a"/><circle cx="1901.5" cy="791.4" r="20" fill="#5b5e5c"/><circle cx="1901.5" cy="791.4" r="8" fill="#7b7b7b"/><path d="M2118,788.8 A24,24 0 1 1 2164,788.8 Q2161,799.8 2151,809.8 L2141,819.8 L2131,809.8 Q2121,799.8 2118,788.8 Z" fill="#7a7a7a"/><circle cx="2141" cy="785.8" r="20" fill="#5b5e5c"/><circle cx="2141" cy="785.8" r="8" fill="#7b7b7b"/><path d="M1392.8,743.8 A24,24 0 1 1 1438.8,743.8 Q1435.8,754.8 1425.8,764.8 L1415.8,774.8 L1405.8,764.8 Q1395.8,754.8 1392.8,743.8 Z" fill="#7a7a7a"/><circle cx="1415.8" cy="740.8" r="20" fill="#6d5d51"/><path d="M1407.8,730.8 v8 q0,4 3,4 v9 M1410.8,730.8 v6 M1413.8,730.8 v8 q0,4 -3,4" stroke="#7b7b7b" stroke-width="2.2" fill="none"/><path d="M1422.8,751.8 v-10 q-4,-2 -3,-8 q1,-4 3,-4 z" fill="#7b7b7b"/><path d="M1245,787 A24,24 0 1 1 1291,787 Q1288,798 1278,808 L1268,818 L1258,808 Q1248,798 1245,787 Z" fill="#7a7a7a"/><circle cx="1268" cy="784" r="20" fill="#625a6d"/><path d="M1257,782 L1268,773 L1279,782 V794 H1257 Z" fill="#7b7b7b"/><text x="1268" y="792" font-size="11" font-weight="700" fill="#625a6d" text-anchor="middle">M</text><path d="M2331.7,963 A24,24 0 1 1 2377.7,963 Q2374.7,974 2364.7,984 L2354.7,994 L2344.7,984 Q2334.7,974 2331.7,963 Z" fill="#7a7a7a"/><circle cx="2354.7" cy="960" r="20" fill="#625a6d"/><path d="M2346.7,950 h4 v3 h2 v-3 h4 v3 h2 v-3 h4 v7 l-3,3 v7 h4 v4 h-20 v-4 h4 v-7 l-3,-3 z" fill="#7b7b7b"/><path d="M1925.8,1035.2 A24,24 0 1 1 1971.8,1035.2 Q1968.8,1046.2 1958.8,1056.2 L1948.8,1066.2 L1938.8,1056.2 Q1928.8,1046.2 1925.8,1035.2 Z" fill="#7a7a7a"/><circle cx="1948.8" cy="1032.2" r="20" fill="#4d5b6b"/><path d="M1938.8,1029.2 H1958.8 L1956.8,1042.2 H1940.8 Z" fill="#7b7b7b"/><path d="M1943.8,1029.2 V1026.2 A5,5 0 0 1 1953.8,1026.2 V1029.2" stroke="#7b7b7b" stroke-width="2" fill="none"/><path d="M2151.6,1250.9 A24,24 0 1 1 2197.6,1250.9 Q2194.6,1261.9 2184.6,1271.9 L2174.6,1281.9 L2164.6,1271.9 Q2154.6,1261.9 2151.6,1250.9 Z" fill="#7a7a7a"/><circle cx="2174.6" cy="1247.9" r="20" fill="#625a6d"/><path d="M2162.6,1241.9 h10 v8 a5,5 0 0 1 -10,0 z M2175.6,1238.9 h10 v8 a5,5 0 0 1 -10,0 z" fill="#7b7b7b"/><path d="M2548,1293 A24,24 0 1 1 2594,1293 Q2591,1304 2581,1314 L2571,1324 L2561,1314 Q2551,1304 2548,1293 Z" fill="#7a7a7a"/><circle cx="2571" cy="1290" r="20" fill="#4a6357"/><circle cx="2571.0" cy="1283.0" r="4.2" fill="#7b7b7b"/><circle cx="2577.7" cy="1287.8" r="4.2" fill="#7b7b7b"/><circle cx="2575.1" cy="1295.7" r="4.2" fill="#7b7b7b"/><circle cx="2566.9" cy="1295.7" r="4.2" fill="#7b7b7b"/><circle cx="2564.3" cy="1287.8" r="4.2" fill="#7b7b7b"/><path d="M2089.8,1450.5 A24,24 0 1 1 2135.8,1450.5 Q2132.8,1461.5 2122.8,1471.5 L2112.8,1481.5 L2102.8,1471.5 Q2092.8,1461.5 2089.8,1450.5 Z" fill="#7a7a7a"/><circle cx="2112.8" cy="1447.5" r="20" fill="#625a6d"/><path d="M2110.3,1436.5 h5 v6 h6 v5 h-6 v11 h-5 v-11 h-6 v-5 h6 z" fill="#7b7b7b"/><path d="M2332,1432.2 A24,24 0 1 1 2378,1432.2 Q2375,1443.2 2365,1453.2 L2355,1463.2 L2345,1453.2 Q2335,1443.2 2332,1432.2 Z" fill="#7a7a7a"/><circle cx="2355" cy="1429.2" r="20" fill="#625a6d"/><path d="M2345,1438.2 V1427.2 H2350 V1422.2 H2360 V1427.2 H2365 V1438.2 Z" fill="#7b7b7b"/><path d="M2355,1422.2 V1417.2 H2360" stroke="#7b7b7b" stroke-width="1.5" fill="none"/><rect x="2352" y="1431.2" width="6" height="7" fill="#625a6d"/><path d="M2184.2,1509.5 A24,24 0 1 1 2230.2,1509.5 Q2227.2,1520.5 2217.2,1530.5 L2207.2,1540.5 L2197.2,1530.5 Q2187.2,1520.5 2184.2,1509.5 Z" fill="#7a7a7a"/><circle cx="2207.2" cy="1506.5" r="20" fill="#4a6357"/><ellipse cx="2207.2" cy="1508.5" rx="11" ry="7" fill="#7b7b7b"/><ellipse cx="2210.2" cy="1501.5" rx="5" ry="3" fill="#7b7b7b"/><path d="M1844.5,1744 A24,24 0 1 1 1890.5,1744 Q1887.5,1755 1877.5,1765 L1867.5,1775 L1857.5,1765 Q1847.5,1755 1844.5,1744 Z" fill="#7a7a7a"/><circle cx="1867.5" cy="1741" r="20" fill="#6d5d51"/><path d="M1859.5,1731 v8 q0,4 3,4 v9 M1862.5,1731 v6 M1865.5,1731 v8 q0,4 -3,4" stroke="#7b7b7b" stroke-width="2.2" fill="none"/><path d="M1874.5,1752 v-10 q-4,-2 -3,-8 q1,-4 3,-4 z" fill="#7b7b7b"/><path d="M2564.6,1752.2 A24,24 0 1 1 2610.6,1752.2 Q2607.6,1763.2 2597.6,1773.2 L2587.6,1783.2 L2577.6,1773.2 Q2567.6,1763.2 2564.6,1752.2 Z" fill="#7a7a7a"/><circle cx="2587.6" cy="1749.2" r="20" fill="#625a6d"/><path d="M2576.6,1747.2 L2587.6,1738.2 L2598.6,1747.2 V1759.2 H2576.6 Z" fill="#7b7b7b"/><text x="2587.6" y="1757.2" font-size="11" font-weight="700" fill="#625a6d" text-anchor="middle">M</text><path d="M1444,1389 A24,24 0 1 1 1490,1389 Q1487,1400 1477,1410 L1467,1420 L1457,1410 Q1447,1400 1444,1389 Z" fill="#7a7a7a"/><circle cx="1467" cy="1386" r="20" fill="#6d5d51"/><path d="M1459,1376 v8 q0,4 3,4 v9 M1462,1376 v6 M1465,1376 v8 q0,4 -3,4" stroke="#7b7b7b" stroke-width="2.2" fill="none"/><path d="M1474,1397 v-10 q-4,-2 -3,-8 q1,-4 3,-4 z" fill="#7b7b7b"/><path d="M1025.3,1594.8 A24,24 0 1 1 1071.3,1594.8 Q1068.3,1605.8 1058.3,1615.8 L1048.3,1625.8 L1038.3,1615.8 Q1028.3,1605.8 1025.3,1594.8 Z" fill="#7a7a7a"/><circle cx="1048.3" cy="1591.8" r="20" fill="#5b5e5c"/><path d="M1036.3,1594.8 H1060.3 M1036.3,1599.8 H1060.3 M1040.3,1582.8 V1602.8 M1056.3,1582.8 V1602.8 M1040.3,1586.8 Q1048.3,1593.8 1056.3,1586.8" stroke="#7b7b7b" stroke-width="2" fill="none"/><path d="M1731,1747.7 A24,24 0 1 1 1777,1747.7 Q1774,1758.7 1764,1768.7 L1754,1778.7 L1744,1768.7 Q1734,1758.7 1731,1747.7 Z" fill="#7a7a7a"/><circle cx="1754" cy="1744.7" r="20" fill="#4a6357"/><circle cx="1754" cy="1744.7" r="8" fill="#7b7b7b"/><path d="M1106,1801 A24,24 0 1 1 1152,1801 Q1149,1812 1139,1822 L1129,1832 L1119,1822 Q1109,1812 1106,1801 Z" fill="#7a7a7a"/><circle cx="1129" cy="1798" r="20" fill="#4d5b6b"/><path d="M1117,1790 h4 l3,12 h12 l3,-9 h-17" stroke="#7b7b7b" stroke-width="2.4" fill="none"/><circle cx="1126" cy="1806" r="2.3" fill="#7b7b7b"/><circle cx="1136" cy="1806" r="2.3" fill="#7b7b7b"/><path d="M2444.5,1937.3 A24,24 0 1 1 2490.5,1937.3 Q2487.5,1948.3 2477.5,1958.3 L2467.5,1968.3 L2457.5,1958.3 Q2447.5,1948.3 2444.5,1937.3 Z" fill="#7a7a7a"/><circle cx="2467.5" cy="1934.3" r="20" fill="#6d5d51"/><path d="M2459.5,1924.3 v8 q0,4 3,4 v9 M2462.5,1924.3 v6 M2465.5,1924.3 v8 q0,4 -3,4" stroke="#7b7b7b" stroke-width="2.2" fill="none"/><path d="M2474.5,1945.3 v-10 q-4,-2 -3,-8 q1,-4 3,-4 z" fill="#7b7b7b"/><path d="M1792,1070 A18,18 0 1 1 1828,1070 Q1826,1084 1810,1102 Q1794,1084 1792,1070 Z" fill="#0a3a7a"/><circle cx="1810" cy="1070" r="7" fill="#7b7b7b"/><path d="M1795,1203 A24,24 0 1 1 1841,1203 Q1838,1214 1828,1224 L1818,1234 L1808,1224 Q1798,1214 1795,1203 Z" fill="#7a7a7a"/><circle cx="1818" cy="1200" r="20" fill="#625a6d"/><path d="M1806,1194 h10 v8 a5,5 0 0 1 -10,0 z M1819,1191 h10 v8 a5,5 0 0 1 -10,0 z" fill="#7b7b7b"/><rect x="2170.4" y="861.5" width="34" height="34" rx="9" fill="#4f5e70" stroke="#7a7a7a" stroke-width="2"/><rect x="2179.4" y="870.5" width="16" height="14" rx="3" fill="#7b7b7b"/><rect x="2211.8" y="861.5" width="34" height="34" rx="9" fill="#4f5e70" stroke="#7a7a7a" stroke-width="2"/><text x="2228.8" y="887.5" font-size="25" font-weight="700" fill="#7b7b7b" text-anchor="middle">M</text><rect x="2251.8" y="861.5" width="34" height="34" rx="9" fill="#4f5e70" stroke="#7a7a7a" stroke-width="2"/><rect x="2260.8" y="870.5" width="16" height="14" rx="3" fill="#7b7b7b"/><rect x="2294" y="1315" width="34" height="34" rx="9" fill="#4f5e70" stroke="#7a7a7a" stroke-width="2"/><text x="2311" y="1341" font-size="25" font-weight="700" fill="#7b7b7b" text-anchor="middle">M</text><rect x="1728.8" y="1674.4" width="34" height="34" rx="9" fill="#4f5e70" stroke="#7a7a7a" stroke-width="2"/><text x="1745.8" y="1700.4" font-size="25" font-weight="700" fill="#7b7b7b" text-anchor="middle">M</text><circle cx="2309" cy="1718.7" r="16" fill="#4f5e70" stroke="#7a7a7a" stroke-width="2.5"/><rect x="2301" y="1712.7" width="16" height="11" rx="2" fill="#7b7b7b"/><circle cx="2501.3" cy="1842.8" r="16" fill="#4f5e70" stroke="#7a7a7a" stroke-width="2.5"/><rect x="2493.3" y="1836.8" width="16" height="11" rx="2" fill="#7b7b7b"/><circle cx="1165" cy="1716" r="16" fill="#4f5e70" stroke="#7a7a7a" stroke-width="2.5"/><rect x="1157" y="1710" width="16" height="11" rx="2" fill="#7b7b7b"/><circle cx="1184.3" cy="1843" r="16" fill="#4f5e70" stroke="#7a7a7a" stroke-width="2.5"/><rect x="1176.3" y="1837" width="16" height="11" rx="2" fill="#7b7b7b"/><path d="M1219.3,433 Q1219.3,429 1223.3,429 H1249.3 Q1253.3,429 1253.3,433 V454 L1236.3,463 L1219.3,454 Z" fill="#727272" stroke="#1e1e1e" stroke-width="2"/><text x="1236.3" y="452" font-size="17" fill="#1e1e1e" text-anchor="middle">99</text><path d="M1522,733.5 Q1522,729.5 1526,729.5 H1552 Q1556,729.5 1556,733.5 V754.5 L1539,763.5 L1522,754.5 Z" fill="#727272" stroke="#1e1e1e" stroke-width="2"/><text x="1539" y="752.5" font-size="17" fill="#1e1e1e" text-anchor="middle">99</text><path d="M1263.7,1769.8 Q1263.7,1765.8 1267.7,1765.8 H1293.7 Q1297.7,1765.8 1297.7,1769.8 V1790.8 L1280.7,1799.8 L1263.7,1790.8 Z" fill="#727272" stroke="#1e1e1e" stroke-width="2"/><text x="1280.7" y="1788.8" font-size="17" fill="#1e1e1e" text-anchor="middle">99</text><circle cx="1959" cy="949" r="8.5" fill="none" stroke="#0b3f80" stroke-width="2.2"/><circle cx="1959" cy="1109.5" r="8.5" fill="none" stroke="#0b3f80" stroke-width="2.2"/><circle cx="1959" cy="1270.2" r="8.5" fill="none" stroke="#0b3f80" stroke-width="2.2"/><g transform="translate(2005.8,857.3) rotate(-45)"><path d="M-9,0 H5 M1,-5 L8,0 L1,5 Z" stroke="#3a3a3a" stroke-width="2.5" fill="#3a3a3a"/></g><g transform="translate(1944.8,918.3) rotate(-45)"><path d="M-9,0 H5 M1,-5 L8,0 L1,5 Z" stroke="#3a3a3a" stroke-width="2.5" fill="#3a3a3a"/></g><g transform="translate(1867.5,993.6) rotate(-45)"><path d="M-9,0 H5 M1,-5 L8,0 L1,5 Z" stroke="#3a3a3a" stroke-width="2.5" fill="#3a3a3a"/></g><g transform="translate(2203,934.6) rotate(-45)"><path d="M-9,0 H5 M1,-5 L8,0 L1,5 Z" stroke="#3a3a3a" stroke-width="2.5" fill="#3a3a3a"/></g><g transform="translate(2178.7,1050.5) rotate(135)"><path d="M-9,0 H5 M1,-5 L8,0 L1,5 Z" stroke="#3a3a3a" stroke-width="2.5" fill="#3a3a3a"/></g><g transform="translate(2127.8,1099.4) rotate(135)"><path d="M-9,0 H5 M1,-5 L8,0 L1,5 Z" stroke="#3a3a3a" stroke-width="2.5" fill="#3a3a3a"/></g><g transform="translate(1820.5,1409) rotate(135)"><path d="M-9,0 H5 M1,-5 L8,0 L1,5 Z" stroke="#3a3a3a" stroke-width="2.5" fill="#3a3a3a"/></g><g transform="translate(1881,1548) rotate(45)"><path d="M-9,0 H5 M1,-5 L8,0 L1,5 Z" stroke="#3a3a3a" stroke-width="2.5" fill="#3a3a3a"/></g><g transform="translate(2066,1619) rotate(135)"><path d="M-9,0 H5 M1,-5 L8,0 L1,5 Z" stroke="#3a3a3a" stroke-width="2.5" fill="#3a3a3a"/></g><g transform="translate(2038,1652) rotate(135)"><path d="M-9,0 H5 M1,-5 L8,0 L1,5 Z" stroke="#3a3a3a" stroke-width="2.5" fill="#3a3a3a"/></g><g transform="translate(2043,1705) rotate(45)"><path d="M-9,0 H5 M1,-5 L8,0 L1,5 Z" stroke="#3a3a3a" stroke-width="2.5" fill="#3a3a3a"/></g><g transform="translate(1521,1321) rotate(-45)"><path d="M-9,0 H5 M1,-5 L8,0 L1,5 Z" stroke="#3a3a3a" stroke-width="2.5" fill="#3a3a3a"/></g><g transform="translate(1373,1685) rotate(-45)"><path d="M-9,0 H5 M1,-5 L8,0 L1,5 Z" stroke="#3a3a3a" stroke-width="2.5" fill="#3a3a3a"/></g><g transform="translate(2496,1450) rotate(180)"><path d="M-9,0 H5 M1,-5 L8,0 L1,5 Z" stroke="#3a3a3a" stroke-width="2.5" fill="#3a3a3a"/></g><g style="paint-order:stroke" stroke="#747474" stroke-width="3" stroke-linejoin="round"><text x="990.8" y="257.9" font-size="27.4" fill="#534a62" text-anchor="start">Harbour Cruises</text><text x="1515.6" y="458.8" font-size="27.4" fill="#6c5343" text-anchor="start">Cardero&#39;s Restaurant</text><text x="920" y="533.8" font-size="27.4" fill="#6c5343" text-anchor="start">lzakaya</text><text x="1496.9" y="550.3" font-size="27.4" fill="#3a5e4b" text-anchor="start">Seawall Water Walk</text><text x="1955" y="601.8" font-size="27.8" fill="#534a62" text-anchor="end">Vancouver Convention</text><text x="1955" y="629" font-size="27.8" fill="#534a62" text-anchor="end">&amp; Exhibition Centre</text><text x="939.2" y="792" font-size="27.4" fill="#534a62" text-anchor="start">Roedde House Museum</text><text x="2048.4" y="657" font-size="27.4" fill="#534a62" text-anchor="start">Canada Place</text><text x="2399.3" y="588" font-size="27.4" fill="#434343" text-anchor="start">Vancouver</text><text x="2400.3" y="615.2" font-size="27.4" fill="#434343" text-anchor="start">Cruise Ship Dock</text><text x="1932" y="806.1" font-size="27.4" fill="#434343" text-anchor="start">Bentall Centre</text><text x="2172" y="799.4" font-size="27.4" fill="#434343" text-anchor="start">Waterfront Station</text><text x="2039.4" y="886.4" font-size="26.8" fill="#465668" text-anchor="start">Waterfront</text><text x="2049.5" y="973.4" font-size="27.6" fill="#534a62" text-anchor="start">Gastown Steam Clock</text><text x="2538.7" y="989.5" font-size="27.4" fill="#6c5343" text-anchor="start">Ask For Luigi</text><text x="2601.8" y="1081" font-size="27" fill="#3b3b3b" text-anchor="start">Powell St</text><text x="2606" y="1121.7" font-size="27.4" fill="#534a62" text-anchor="start">Vancouver Police</text><text x="2573.3" y="1148" font-size="27.4" fill="#534a62" text-anchor="start">Museum</text><text x="1918" y="1046.5" font-size="27.4" fill="#465668" text-anchor="end">Pacific Centre</text><text x="2582.8" y="1212.8" font-size="28" fill="#3b3b3b" text-anchor="start">E Hastings</text><text x="2602.3" y="1261" font-size="27.4" fill="#3a5e4b" text-anchor="start">Dr. Sun</text><text x="2602.3" y="1287.6" font-size="27.4" fill="#3a5e4b" text-anchor="start">Yat-Sen</text><text x="2602.3" y="1315.2" font-size="27.4" fill="#3a5e4b" text-anchor="start">Classical</text><text x="2602.3" y="1344" font-size="27.4" fill="#3a5e4b" text-anchor="start">Chinese</text><text x="2060.7" y="1341.4" font-size="25.9" fill="#465668" text-anchor="start">Stadium-Chinatown</text><text x="2518.3" y="1397.2" font-size="27.2" fill="#6c5343" text-anchor="start">Phnom Penh</text><text x="1908" y="1461.7" font-size="27.4" fill="#534a62" text-anchor="start">Robson Street</text><text x="2157.5" y="1443.4" font-size="27.4" fill="#534a62" text-anchor="start">Rogers Arena</text><text x="1955" y="1520.7" font-size="27.4" fill="#3a5e4b" text-anchor="start">BC Place Stadium</text><text x="1898" y="1755.3" font-size="27.4" fill="#6c5343" text-anchor="start">OEB Breakfast Co</text><text x="2036.3" y="1804" font-size="27.4" fill="#3a5e4b" text-anchor="start">Parc Cooper&#39;s</text><text x="2378" y="1761.4" font-size="27.4" fill="#534a62" text-anchor="start">Science World</text><text x="2530.6" y="1704.4" font-size="27.4" fill="#3a5e4b" text-anchor="start">Creekside Park</text><text x="2557" y="1865" font-size="27.4" fill="#6c5343" text-anchor="start">McDonald&#39;s</text><text x="992.7" y="1349.2" font-size="27.4" fill="#3a5e4b" text-anchor="middle">Sunset</text><text x="991.7" y="1375.8" font-size="27.4" fill="#3a5e4b" text-anchor="middle">Beach Park</text><text x="1437.2" y="1386" font-size="27.4" fill="#6c5343" text-anchor="end">Breka Bakery</text><text x="1437.2" y="1412.7" font-size="27.4" fill="#6c5343" text-anchor="end">&amp; Café - Davie</text><text x="1018.4" y="1605.3" font-size="27.4" fill="#434343" text-anchor="end">Burrard</text><text x="1463" y="1699.6" font-size="25.8" fill="#465668" text-anchor="start">Yaletown-Roundhouse</text><text x="1723" y="1743.4" font-size="27.4" fill="#3a5e4b" text-anchor="end">Roundhouse Community</text><text x="1724" y="1770.5" font-size="27.4" fill="#3a5e4b" text-anchor="end">Arts &amp; Recreation Centre</text><text x="1098.3" y="1798" font-size="27.4" fill="#465668" text-anchor="end">Marché public</text><text x="1096" y="1825.8" font-size="27.4" fill="#465668" text-anchor="end">de l&#39;île Granville</text><text x="1398.5" y="1828.7" font-size="27.4" fill="#3a5e4b" text-anchor="middle">George</text><text x="1398.5" y="1856.6" font-size="27.4" fill="#3a5e4b" text-anchor="middle">Wainborn</text><text x="1398.5" y="1884" font-size="27.4" fill="#3a5e4b" text-anchor="middle">Park</text><text x="1541" y="1855.3" font-size="27.4" fill="#3a5e4b" text-anchor="start">Parc David</text><text x="1014.7" y="583.3" font-size="24" font-weight="400" fill="#3a3a3a" stroke-width="4" text-anchor="middle" letter-spacing="2.8499999999999996">VANCOUVER</text><text x="1014.7" y="583.3" font-size="24" font-weight="400" fill="#3a3a3a" stroke="#3a3a3a" stroke-width="0.9" text-anchor="middle" letter-spacing="2.8499999999999996">VANCOUVER</text><text x="1014.9" y="608.8" font-size="24" font-weight="400" fill="#3a3a3a" stroke-width="4" text-anchor="middle" letter-spacing="2.8499999999999996">WEST END</text><text x="1014.9" y="608.8" font-size="24" font-weight="400" fill="#3a3a3a" stroke="#3a3a3a" stroke-width="0.9" text-anchor="middle" letter-spacing="2.8499999999999996">WEST END</text><text x="1718.5" y="665.1" font-size="24" font-weight="400" fill="#3a3a3a" stroke-width="4" text-anchor="middle" letter-spacing="2.5999999999999996">COAL HARBOUR</text><text x="1718.5" y="665.1" font-size="24" font-weight="400" fill="#3a3a3a" stroke="#3a3a3a" stroke-width="0.9" text-anchor="middle" letter-spacing="2.5999999999999996">COAL HARBOUR</text><text x="1970.2" y="1160.4" font-size="24" font-weight="400" fill="#3a3a3a" stroke-width="4" text-anchor="middle" letter-spacing="2.6999999999999997">DOWNTOWN</text><text x="1970.2" y="1160.4" font-size="24" font-weight="400" fill="#3a3a3a" stroke="#3a3a3a" stroke-width="0.9" text-anchor="middle" letter-spacing="2.6999999999999997">DOWNTOWN</text><text x="1971.2" y="1186.8" font-size="24" font-weight="400" fill="#3a3a3a" stroke-width="4" text-anchor="middle" letter-spacing="2.6999999999999997">VANCOUVER</text><text x="1971.2" y="1186.8" font-size="24" font-weight="400" fill="#3a3a3a" stroke="#3a3a3a" stroke-width="0.9" text-anchor="middle" letter-spacing="2.6999999999999997">VANCOUVER</text><text x="2455.2" y="1113.6" font-size="24" font-weight="400" fill="#3a3a3a" stroke-width="4" text-anchor="middle" letter-spacing="2.5999999999999996">GASTOWN</text><text x="2455.2" y="1113.6" font-size="24" font-weight="400" fill="#3a3a3a" stroke="#3a3a3a" stroke-width="0.9" text-anchor="middle" letter-spacing="2.5999999999999996">GASTOWN</text><text x="1848" y="1620.4" font-size="24" font-weight="400" fill="#3a3a3a" stroke-width="4" text-anchor="middle" letter-spacing="2.6999999999999997">YALETOWN</text><text x="1848" y="1620.4" font-size="24" font-weight="400" fill="#3a3a3a" stroke="#3a3a3a" stroke-width="0.9" text-anchor="middle" letter-spacing="2.6999999999999997">YALETOWN</text><text x="1189.9" y="1939.3" font-size="24" font-weight="400" fill="#3a3a3a" stroke-width="4" text-anchor="middle" letter-spacing="2.6999999999999997">GRANVILLE</text><text x="1189.9" y="1939.3" font-size="24" font-weight="400" fill="#3a3a3a" stroke="#3a3a3a" stroke-width="0.9" text-anchor="middle" letter-spacing="2.6999999999999997">GRANVILLE</text><text x="1188.5" y="1966" font-size="24" font-weight="400" fill="#3a3a3a" stroke-width="4" text-anchor="middle" letter-spacing="2.6999999999999997">ISLAND</text><text x="1188.5" y="1966" font-size="24" font-weight="400" fill="#3a3a3a" stroke="#3a3a3a" stroke-width="0.9" text-anchor="middle" letter-spacing="2.6999999999999997">ISLAND</text><text transform="translate(1055,399) rotate(-45)" x="0" y="8.3" font-size="23" fill="#3b3b3b" text-anchor="middle">Gilford St</text><text transform="translate(1134.8,466.8) rotate(-45)" x="0" y="9.4" font-size="26" fill="#3b3b3b" text-anchor="middle">Denman St</text><text transform="translate(1238,514.5) rotate(45)" x="0" y="8.3" font-size="23" fill="#3b3b3b" text-anchor="middle">Alberni Street Bute</text><text transform="translate(1061.3,682.3) rotate(44)" x="0" y="8.1" font-size="22.4" fill="#3b3b3b" text-anchor="middle">Ted Northe Ln</text><text transform="translate(1094,663) rotate(45)" x="0" y="8.6" font-size="23.8" fill="#3b3b3b" text-anchor="middle">Barclay St</text><text transform="translate(1304.3,674.4) rotate(44)" x="0" y="9.9" font-size="27.5" fill="#3b3b3b" text-anchor="middle">Robson Street</text><text transform="translate(1522,597.3) rotate(26)" x="0" y="8.0" font-size="22.2" fill="#3b3b3b" text-anchor="middle">W Hastings St</text><text transform="translate(1497.2,626.7) rotate(27)" x="0" y="9.3" font-size="25.8" fill="#3b3b3b" text-anchor="middle">W Pender St</text><text transform="translate(1809,723.9) rotate(27)" x="0" y="8.0" font-size="22.2" fill="#3b3b3b" text-anchor="middle">W Hastings St</text><text transform="translate(1759.4,742) rotate(28)" x="0" y="9.3" font-size="25.8" fill="#3b3b3b" text-anchor="middle">W Pender St</text><text transform="translate(1647.5,749.9) rotate(43)" x="0" y="10.0" font-size="27.7" fill="#3b3b3b" text-anchor="middle">Melville St</text><text transform="translate(1936.5,730.4) rotate(25)" x="0" y="8.0" font-size="22.2" fill="#3b3b3b" text-anchor="middle">W Cordova St</text><text transform="translate(2002,951) rotate(-45)" x="0" y="8.3" font-size="23" fill="#3b3b3b" text-anchor="middle">Howe St</text><text transform="translate(2369.9,879.7) rotate(25)" x="0" y="7.9" font-size="22" fill="#3b3b3b" text-anchor="middle">W Waterfront Rd</text><text transform="translate(2439,1022) rotate(21)" x="0" y="9.0" font-size="25" fill="#3b3b3b" text-anchor="middle">Water St</text><text transform="translate(2254,1060.7) rotate(46)" x="0" y="9.4" font-size="26" fill="#3b3b3b" text-anchor="middle">W Hastings St</text><text transform="translate(2048.5,1095.3) rotate(44)" x="0" y="9.4" font-size="26" fill="#3b3b3b" text-anchor="middle">Dunsmuir St</text><text transform="translate(1955,1274.3) rotate(-45)" x="0" y="8.6" font-size="24" fill="#3b3b3b" text-anchor="middle">Richards St</text><text transform="translate(1975.3,1341.4) rotate(-45)" x="0" y="7.6" font-size="21" fill="#3b3b3b" text-anchor="middle">Homer St</text><text transform="translate(2326,1264) rotate(-47)" x="0" y="7.6" font-size="21" fill="#3b3b3b" text-anchor="middle">Beatty St</text><text transform="translate(2410.7,1295.8) rotate(90)" x="0" y="7.9" font-size="22" fill="#3b3b3b" text-anchor="middle">Abbott St</text><text transform="translate(2484.5,1344) rotate(17)" x="0" y="7.9" font-size="22" fill="#3b3b3b" text-anchor="middle">Keefer Pl</text><text transform="translate(1855,1368) rotate(45)" x="0" y="9.4" font-size="26" fill="#3b3b3b" text-anchor="middle">Smithe St</text><text transform="translate(2460,1459) rotate(22)" x="0" y="9.4" font-size="26" fill="#3b3b3b" text-anchor="middle">Dunsmuir St</text><text transform="translate(2389,1497) rotate(8)" x="0" y="9.4" font-size="26" fill="#3b3b3b" text-anchor="middle">W Georgia St</text><text transform="translate(2172.6,1661) rotate(-35)" x="0" y="9.4" font-size="26" fill="#3b3b3b" text-anchor="middle">Pacific Blvd</text><text transform="translate(1122.9,1390.2) rotate(45)" x="0" y="8.6" font-size="24" fill="#3b3b3b" text-anchor="middle">Pacific St</text><text transform="translate(1145.4,1361.5) rotate(45)" x="0" y="7.6" font-size="21" fill="#3b3b3b" text-anchor="middle">Jung Ln</text><text transform="translate(1221.2,1369.7) rotate(-45)" x="0" y="9.4" font-size="26" fill="#3b3b3b" text-anchor="middle">Thurlow St</text><text transform="translate(1404.4,1464) rotate(-45)" x="0" y="7.6" font-size="21" fill="#3b3b3b" text-anchor="middle">Hornby St</text><text transform="translate(1547,1509) rotate(45)" x="0" y="8.3" font-size="23" fill="#3b3b3b" text-anchor="middle">Davie St</text><text transform="translate(1465,1593) rotate(-45)" x="0" y="8.6" font-size="24" fill="#3b3b3b" text-anchor="middle">Granville St</text><text transform="translate(1731.5,1410.7) rotate(-45)" x="0" y="8.6" font-size="24" fill="#3b3b3b" text-anchor="middle">Seymour St</text><text transform="translate(1797,1458) rotate(45)" x="0" y="8.6" font-size="24" fill="#3b3b3b" text-anchor="middle">Nelson St.</text><text transform="translate(1723.3,1505) rotate(-45)" x="0" y="8.6" font-size="24" fill="#3b3b3b" text-anchor="middle">Richards St</text><text transform="translate(1640,1318) rotate(-45)" x="0" y="8.6" font-size="24" fill="#3b3b3b" text-anchor="middle">Howe St</text><text transform="translate(971.2,1664.8) rotate(-27)" x="0" y="9.4" font-size="26" fill="#3b3b3b" text-anchor="middle">Burrard St</text><text transform="translate(970.7,1033.3) rotate(-45)" x="0" y="7.6" font-size="21" fill="#3b3b3b" text-anchor="middle">Nicola St</text><text transform="translate(943.6,1111) rotate(45)" x="0" y="7.6" font-size="21" fill="#3b3b3b" text-anchor="middle">Harwood St</text><text transform="translate(933.5,847.5) rotate(45)" x="0" y="7.6" font-size="21" fill="#3b3b3b" text-anchor="middle">Nicola Ln</text><text transform="translate(930,665) rotate(-45)" x="0" y="8.3" font-size="23" fill="#3b3b3b" text-anchor="middle">Bidwell St</text><text transform="translate(925,470) rotate(45)" x="0" y="7.6" font-size="21" fill="#3b3b3b" text-anchor="middle">Cardero Ln</text></g>
</svg>

<div class="mbtn" style="left:1664px;top:24px;width:72px;height:72px">
 <svg class="abs" style="left:19px;top:19px" width="34" height="34" viewBox="0 0 34 34"><path d="M17 3 L31 10 L17 17 L3 10 Z" fill="none" stroke="#262626" stroke-width="2.3" stroke-linejoin="round"/><path d="M3 16 L17 23 L31 16" fill="none" stroke="#262626" stroke-width="2.3" stroke-linejoin="round"/><path d="M3 22 L17 29 L31 22" fill="none" stroke="#262626" stroke-width="2.3" stroke-linejoin="round"/></svg>
</div>
<div class="mbtn" style="left:1664px;top:120px;width:72px;height:144px">
 <div class="abs" style="left:0;top:72px;width:72px;height:1.5px;background:#6e6e6e"></div>
 <div class="abs" style="left:21px;top:35px;width:30px;height:2.4px;background:#262626"></div>
 <div class="abs" style="left:34.8px;top:21px;width:2.4px;height:30px;background:#262626"></div>
 <div class="abs" style="left:21px;top:108px;width:30px;height:2.6px;background:#262626"></div>
</div>
<div class="mbtn" style="left:1664px;top:288px;width:72px;height:72px">
 <svg class="abs" style="left:22px;top:14px" width="28" height="46" viewBox="0 0 28 46"><circle cx="14" cy="7" r="6.5" fill="#8c6d12" stroke="#3a2e10" stroke-width="0.8"/><path d="M6 14 H22 Q26 15 27 22 L27.5 31 L24 31 L23 24 L21 24 L21 44 L15.5 44 L15.5 33 L12.5 33 L12.5 44 L7 44 L7 24 L5 24 L4.5 31 L1 31 L1.5 22 Q2 15 6 14 Z" fill="#8c6d12" stroke="#3a2e10" stroke-width="0.8"/><path d="M10 14 L14 21 L18 14 Z" fill="#7a4a1a"/></svg>
</div>
<div class="abs" style="left:607px;top:1628px;width:221px;height:73px;background:#777;border-radius:10px;box-shadow:0 1px 4px rgba(0,0,0,.3);overflow:hidden">
 <div class="abs" style="left:0;top:0;width:73px;height:73px;background:#6c7683"></div>
 <div class="abs" style="left:73px;top:0;width:1.5px;height:73px;background:#6b7a8a"></div>
 <div class="abs" style="left:148px;top:0;width:1.5px;height:73px;background:#6b7a8a"></div>
 <svg class="abs" style="left:0;top:0" width="221" height="73" viewBox="0 0 221 73">
  <g fill="none" stroke="#0c3480" stroke-width="2.2"><rect x="22.5" y="22.5" width="28" height="28"/><circle cx="22.5" cy="22.5" r="2.8" fill="#6c7683"/><circle cx="50.5" cy="22.5" r="2.8" fill="#6c7683"/><circle cx="22.5" cy="50.5" r="2.8" fill="#6c7683"/><circle cx="50.5" cy="50.5" r="2.8" fill="#6c7683"/></g>
  <g fill="none" stroke="#333" stroke-width="2"><circle cx="110.5" cy="36.5" r="15"/><circle cx="110.5" cy="21.5" r="2.8" fill="#777"/><circle cx="110.5" cy="51.5" r="2.8" fill="#777"/><circle cx="95.5" cy="36.5" r="2.8" fill="#777"/><circle cx="125.5" cy="36.5" r="2.8" fill="#777"/>
  <polyline points="170,36.5 185,22 "/><polyline points="170,36.5 184.5,51.5 199,36.5"/><circle cx="170" cy="36.5" r="2.8" fill="#777"/><circle cx="185" cy="22" r="2.8" fill="#777"/><circle cx="184.5" cy="51.5" r="2.8" fill="#777"/><circle cx="199" cy="36.5" r="2.8" fill="#777"/></g>
 </svg>
</div>
<div class="abs" style="left:852px;top:1628px;width:301px;height:73px;background:#777;border-radius:10px;box-shadow:0 1px 4px rgba(0,0,0,.3);overflow:hidden">
 <div class="abs" style="left:72.5px;top:0;width:1.5px;height:73px;background:#707070"></div>
 <div class="abs" style="left:146px;top:0;width:1.5px;height:73px;background:#707070"></div>
 <svg class="abs" style="left:0;top:0" width="160" height="73" viewBox="0 0 160 73"><g fill="none" stroke="#626262" stroke-width="2.2"><path d="M22 27 H40 Q50 27 50 37 Q50 47 40 47 H26 M28 20 L21 27 L28 34"/><path d="M123 27 H105 Q95 27 95 37 Q95 47 105 47 H119 M117 20 L124 27 L117 34"/></g></svg>
 <div class="abs" style="left:172px;top:16px;font-size:28.3px;line-height:40px;font-weight:700;color:#5f5f5f;white-space:nowrap">Effacer</div>
</div>
<div class="abs" style="left:975px;top:1716px;width:785px;height:24px;background:rgba(130,130,130,.55)"></div>
<div class="abs" style="left:985px;top:1717px;font-size:19.7px;line-height:22px;color:#151515;white-space:nowrap">Raccourcis-clavier</div>
<div class="abs" style="left:1171.6px;top:1717px;font-size:19.6px;line-height:22px;color:#151515;white-space:nowrap">Données cartographiques ©2026 Google</div>
<div class="abs" style="left:1550px;top:1717px;font-size:19.8px;line-height:22px;color:#151515;white-space:nowrap">Conditions d'utilisation</div>
<svg class="abs" style="left:14px;top:1690px" width="130" height="50" viewBox="0 0 130 50"><text x="4" y="37" font-size="37" font-weight="700" fill="#777" stroke="#242424" stroke-width="3.5" style="paint-order:stroke" letter-spacing="-2">Google</text></svg>
</div>
</div>
<div id="ring"></div>
<div id="modal">
  <div class="abs" style="left:50px;top:46.9px;font-size:35.6px;line-height:35.6px;font-weight:700;color:#000;white-space:nowrap">Créer une catégorie de géozones</div>
  <svg class="abs" style="left:709px;top:54px" width="30" height="30" viewBox="0 0 30 30"><path d="M3 3 L27 27 M27 3 L3 27" stroke="#3a3a3a" stroke-width="2.6" fill="none"/></svg>
  <div class="abs" style="left:0;top:136px;width:800px;height:1.5px;background:#e6e6e6"></div>
  <div class="abs" style="left:49.7px;top:175.6px;font-size:28.2px;line-height:28.2px;color:#222;white-space:nowrap">Nom</div>
  <div class="abs" style="left:51.6px;top:214px;width:696px;height:70px;border:1.5px solid #cfcfcf;border-radius:7px;overflow:hidden">
    <div class="abs" style="left:583px;top:0;width:113px;height:70px;background:#fafafa;border-left:1.5px solid #cfcfcf"></div>
  </div>
  <div class="abs" style="left:77.7px;top:235.4px;font-size:29.6px;line-height:29.6px;color:#262626;white-space:nowrap">Périmètre Virtuel2</div>
  <div class="abs" style="left:662px;top:238.5px;width:21px;height:21px;border-radius:50%;background:#0b6fe3"></div>
  <svg class="abs" style="left:707px;top:242px" width="22" height="14" viewBox="0 0 22 14"><path d="M2 2.5 L11 11 L20 2.5" fill="none" stroke="#333" stroke-width="2.2"/></svg>
  <div class="abs" style="left:0;top:320px;width:800px;height:1.5px;background:#e6e6e6"></div>
  <div class="abs" style="left:373.6px;top:370.6px;width:155px;height:70px;border:1.5px solid #cdcdcd;border-radius:7px;font-size:28px;font-weight:700;color:#000;text-align:center;line-height:67px">Annuler</div>
  <div class="abs" style="left:553.6px;top:370.6px;width:198px;height:70px;background:#0071e3;border-radius:7px;font-size:28px;font-weight:700;color:#fff;text-align:center;line-height:70px">Enregistrer</div>
</div>
</body></html>
